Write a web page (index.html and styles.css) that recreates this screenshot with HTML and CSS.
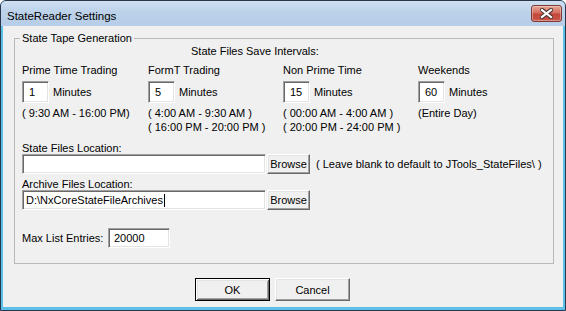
FILE: index.html
```html
<!DOCTYPE html>
<html lang="en">
<head>
    <meta charset="UTF-8">
    <title>StateReader Settings</title>
    <link rel="stylesheet" href="styles.css">
</head>
<body>
    <div class="window">
        <div class="titlebar">
            <span class="title">StateReader Settings</span>
            <button class="close" aria-label="Close">
                <svg width="13" height="11" viewBox="0 0 13 11">
                    <path d="M2 2 L11 9 M11 2 L2 9" stroke="#4a3434" stroke-width="4.2" stroke-linecap="square"/>
                    <path d="M2 2 L11 9 M11 2 L2 9" stroke="#ffffff" stroke-width="2.2" stroke-linecap="square"/>
                </svg>
            </button>
        </div>

        <div class="client">
            <fieldset class="group">
                <legend>State Tape Generation</legend>
                <div class="group-body">
                    <div class="intervals-title">State Files Save Intervals:</div>

                    <div class="intervals">
                        <div class="period">
                            <div class="period-name">Prime Time Trading</div>
                            <div class="period-value"><div class="edit small">1</div><span>Minutes</span></div>
                            <div class="period-range">( 9:30 AM - 16:00 PM)</div>
                        </div>
                        <div class="period">
                            <div class="period-name">FormT Trading</div>
                            <div class="period-value"><div class="edit small">5</div><span>Minutes</span></div>
                            <div class="period-range">( 4:00 AM - 9:30 AM )<br>( 16:00 PM - 20:00 PM )</div>
                        </div>
                        <div class="period">
                            <div class="period-name">Non Prime Time</div>
                            <div class="period-value"><div class="edit small">15</div><span>Minutes</span></div>
                            <div class="period-range">( 00:00 AM - 4:00 AM )<br>( 20:00 PM - 24:00 PM )</div>
                        </div>
                        <div class="period">
                            <div class="period-name">Weekends</div>
                            <div class="period-value"><div class="edit small">60</div><span>Minutes</span></div>
                            <div class="period-range">(Entire Day)</div>
                        </div>
                    </div>

                    <div class="location">
                        <div class="location-label">State Files Location:</div>
                        <div class="location-row">
                            <div class="edit path"></div>
                            <button class="btn browse">Browse</button>
                            <span class="hint">( Leave blank to default to JTools_StateFiles\ )</span>
                        </div>
                    </div>

                    <div class="location archive">
                        <div class="location-label">Archive Files Location:</div>
                        <div class="location-row">
                            <div class="edit path">D:\NxCoreStateFileArchives<span class="caret"></span></div>
                            <button class="btn browse">Browse</button>
                        </div>
                    </div>

                    <div class="max-row">
                        <span class="max-label">Max List Entries:</span>
                        <div class="edit max">20000</div>
                    </div>
                </div>
            </fieldset>

            <div class="actions">
                <button class="btn default">OK</button>
                <button class="btn">Cancel</button>
            </div>
        </div>
    </div>
</body>
</html>
```

FILE: styles.css
```css
* {
    margin: 0;
    padding: 0;
    box-sizing: border-box;
}

:root {
    --face: #f0f0f0;
    --shadow: #a0a0a0;
    --dark: #696969;
    --light: #e3e3e3;
}

body {
    width: 566px;
    height: 311px;
    overflow: hidden;
    background: #ffffff;
    font-family: "Liberation Sans", Arial, sans-serif;
    font-size: 11px;
    color: #000;
}

.window {
    width: 566px;
    height: 311px;
    display: flex;
    flex-direction: column;
    border: 1px solid #27374c;
    border-radius: 6px 6px 0 0;
    background: #5cc0e8;
    padding: 0 2px 3px;
}

.titlebar {
    height: 25px;
    margin: 0 -2px;
    display: flex;
    justify-content: space-between;
    align-items: flex-start;
    padding: 4px 3px 0 6px;
    border-radius: 5px 5px 0 0;
    background: linear-gradient(#d0dff0, #bcd2ea 45%, #b7cde8);
}

.title {
    margin-top: 3px;
    font-size: 11.5px;
    line-height: 16px;
    color: #000;
}

.close {
    width: 31px;
    height: 17px;
    display: flex;
    align-items: center;
    justify-content: center;
    border: 1px solid #7d3a32;
    border-radius: 3px;
    background: linear-gradient(#e7a697, #d56d5d 45%, #c4463a 55%, #c9574a);
    box-shadow: inset 0 0 0 1px rgba(255, 255, 255, 0.35);
}

.client {
    flex: 1;
    display: flex;
    flex-direction: column;
    background: var(--face);
    padding: 5px 9px 0 11px;
}

.group {
    border: 1px solid #b8b8b8;
    padding: 0;
}

.group legend {
    margin-left: 5px;
    padding: 0 2px;
    line-height: 14px;
}

.group-body {
    padding: 0 7px 15px 7px;
}

.intervals-title {
    margin-left: 169px;
    line-height: 13px;
}

.intervals {
    margin-top: 6px;
    display: grid;
    grid-template-columns: 126px 135px 135px 1fr;
}

.period-name {
    line-height: 13px;
}

.period-value {
    margin-top: 4px;
    height: 22px;
    display: flex;
    align-items: center;
    gap: 4px;
}

.period-range {
    margin-top: 3px;
    line-height: 14px;
}

.edit {
    background: #fff;
    border: 1px solid;
    border-color: var(--shadow) #fff #fff var(--shadow);
    box-shadow: inset 1px 1px 0 var(--dark), inset -1px -1px 0 var(--light);
    padding-left: 3px;
    display: flex;
    align-items: center;
    white-space: nowrap;
}

.edit.small {
    width: 27px;
    height: 22px;
    padding-left: 6px;
}

.location {
    margin-top: 8px;
}

.location.archive {
    margin-top: 4px;
}

.location-label {
    line-height: 12px;
}

.location-row {
    display: flex;
    align-items: center;
}

.edit.path {
    width: 244px;
    height: 20px;
}

.caret {
    width: 1px;
    height: 13px;
    margin-left: 1px;
    background: #000;
}

.btn {
    font-family: inherit;
    font-size: 11px;
    color: #000;
    background: var(--face);
    border: 1px solid;
    border-color: #fff var(--dark) var(--dark) #fff;
    box-shadow: inset -1px -1px 0 var(--shadow), inset 1px 1px 0 var(--light);
}

.btn.browse {
    width: 43px;
    height: 20px;
    margin-left: 1px;
}

.hint {
    margin-left: 6px;
}

.max-row {
    margin-top: 18px;
    display: flex;
    align-items: center;
}

.max-label {
    width: 86px;
}

.edit.max {
    width: 62px;
    height: 20px;
    padding-left: 5px;
}

.actions {
    margin-top: 14px;
    padding-left: 181px;
    display: flex;
    gap: 5px;
}

.actions .btn {
    width: 75px;
    height: 23px;
}

.actions .btn.default {
    border-color: #000;
    box-shadow: inset 1px 1px 0 #fff, inset -1px -1px 0 var(--dark), inset 2px 2px 0 var(--light), inset -2px -2px 0 var(--shadow);
}
```
